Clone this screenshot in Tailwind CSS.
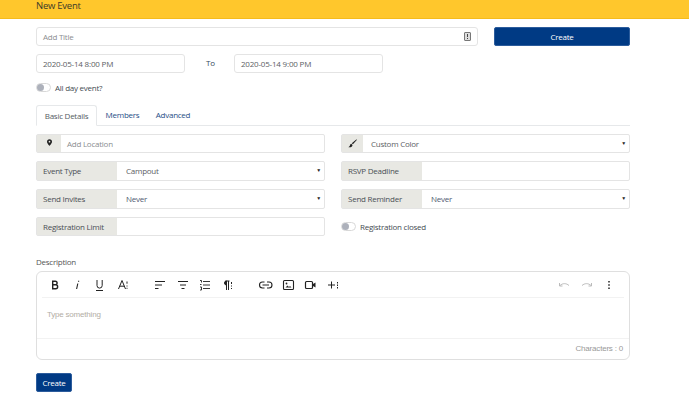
<!DOCTYPE html>
<html lang="en">
<head>
  <meta charset="UTF-8" />
  <title>New Event</title>
  <script src="https://cdn.jsdelivr.net/npm/@tailwindcss/browser@4"></script>
</head>
<body class="bg-white h-[401px] overflow-hidden font-['Open_Sans',sans-serif] text-[8px] tracking-[-0.25px] text-[#4a4f55]">
  <!-- header -->
  <div class="h-[19px] bg-[#ffc72c] border-b border-[#f5bb1c] pl-[36px]">
    <div class="text-[9.500px] leading-[11px] text-[#3b3a2a]">New Event</div>
  </div>

  <div class="pl-[36px] w-[630px]">
    <!-- title row -->
    <div class="flex mt-[8px] gap-[16px]">
      <div class="w-[442px] h-[19px] flex items-center justify-between px-[6px] border border-[#e4e4e4] rounded-[3px] text-[#8a8d90]">
        <span>Add Title</span>
        <svg width="7" height="9" viewBox="0 0 7 9"><rect x=".5" y=".5" width="6" height="8" rx=".5" fill="#ddd" stroke="#777"/><path d="M3.5 2v3M3.5 6v1" stroke="#444"/></svg>
      </div>
      <button class="w-[136px] h-[19px] bg-[#003a84] rounded-[2px] text-white font-medium border border-[#2c5c9c]">Create</button>
    </div>

    <!-- dates -->
    <div class="flex items-center mt-[8px]">
      <div class="w-[149px] h-[19px] flex items-center px-[6px] border border-[#e4e4e4] rounded-[3px] tracking-[-0.2px] text-[#5c6064]">2020-05-14 8:00 PM</div>
      <div class="w-[49px] pl-[21px] text-[#33475b] -mt-[1px]">To</div>
      <div class="w-[149px] h-[19px] flex items-center px-[6px] border border-[#e4e4e4] rounded-[3px] tracking-[-0.2px] text-[#5c6064]">2020-05-14 9:00 PM</div>
    </div>

    <!-- all day -->
    <div class="flex items-center mt-[10px] h-[9px] gap-[4px] text-[#444b52]">
      <span class="w-[15px] h-[9px] rounded-full border border-[#d8d8d8] flex items-center"><span class="w-[7px] h-[7px] rounded-full bg-[#adb1bb]"></span></span>
      <span>All day event?</span>
    </div>

    <!-- tabs -->
    <div class="flex mt-[13px] h-[21px] border-b border-[#e6e8ea]">
      <div class="h-[21px] w-[61px] flex items-center justify-center border border-[#e6e8ea] border-b-white rounded-t-[3px] text-[#555c63]">Basic Details</div>
      <div class="h-[20px] w-[51px] flex items-center justify-center text-[#1f4e86]">Members</div>
      <div class="h-[20px] w-[50px] flex items-center justify-center text-[#1f4e86]">Advanced</div>
    </div>

    <!-- basic details fields -->
    <div class="grid grid-cols-2 gap-x-[16px] mt-[8px]">
      <div class="flex h-[19px] border border-[#e4e4e4] rounded-[2px]">
        <div class="w-[24px] bg-[#e8e8e3] flex items-center justify-center">
          <svg class="-mt-[3px]" width="5" height="7" viewBox="0 0 6 8"><path fill-rule="evenodd" d="M3 0a3 3 0 0 1 3 3C6 5 3 8 3 8S0 5 0 3a3 3 0 0 1 3-3zm0 2a1 1 0 1 0 0 2 1 1 0 0 0 0-2z" fill="#222"/></svg>
        </div>
        <div class="flex-1 flex items-center pl-[6px] text-[#8a8d90]">Add Location</div>
      </div>
      <div class="flex h-[19px] border border-[#e4e4e4] rounded-[2px]">
        <div class="w-[21px] bg-[#e8e8e3] flex items-center justify-center">
          <svg width="9" height="9" viewBox="0 0 9 9"><path d="M8.600.3 3.800 4.200l1.100 1.100L8.800 1zM3.200 4.700C1.800 5 2.200 6.600 1.500 7.200L.4 8.200c2.300.4 4-.4 4.100-2.200z" fill="#222"/></svg>
        </div>
        <div class="flex-1 flex items-center justify-between pl-[8px] pr-[3px] text-[#5c6064]"><span>Custom Color</span><span class="text-[5px] text-[#222]">▼</span></div>
      </div>
    </div>

    <div class="grid grid-cols-2 gap-x-[16px] mt-[8px]">
      <div class="flex h-[20px] border border-[#e4e4e4] rounded-[2px]">
        <div class="w-[80px] bg-[#e8e8e3] flex items-center pl-[6px] text-[#4a4f55]">Event Type</div>
        <div class="flex-1 flex items-center justify-between pl-[9px] pr-[3px] text-[#5c6064]"><span>Campout</span><span class="text-[5px] text-[#222]">▼</span></div>
      </div>
      <div class="flex h-[20px] border border-[#e4e4e4] rounded-[2px]">
        <div class="w-[80px] bg-[#e8e8e3] flex items-center pl-[6px] text-[#4a4f55]">RSVP Deadline</div>
        <div class="flex-1"></div>
      </div>
    </div>

    <div class="grid grid-cols-2 gap-x-[16px] mt-[8px]">
      <div class="flex h-[20px] border border-[#e4e4e4] rounded-[2px]">
        <div class="w-[80px] bg-[#e8e8e3] flex items-center pl-[6px] text-[#4a4f55]">Send Invites</div>
        <div class="flex-1 flex items-center justify-between pl-[9px] pr-[3px] text-[#4f5a70]"><span>Never</span><span class="text-[5px] text-[#222]">▼</span></div>
      </div>
      <div class="flex h-[20px] border border-[#e4e4e4] rounded-[2px]">
        <div class="w-[80px] bg-[#e8e8e3] flex items-center pl-[6px] text-[#4a4f55]">Send Reminder</div>
        <div class="flex-1 flex items-center justify-between pl-[9px] pr-[3px] text-[#4f5a70]"><span>Never</span><span class="text-[5px] text-[#222]">▼</span></div>
      </div>
    </div>

    <div class="grid grid-cols-2 gap-x-[16px] mt-[8px]">
      <div class="flex h-[19px] border border-[#e4e4e4] rounded-[2px]">
        <div class="w-[80px] bg-[#e8e8e3] flex items-center pl-[6px] text-[#4a4f55]">Registration Limit</div>
        <div class="flex-1"></div>
      </div>
      <div class="flex items-center gap-[4px] text-[#444b52]">
        <span class="w-[15px] h-[9px] rounded-full border border-[#d8d8d8] flex items-center"><span class="w-[7px] h-[7px] rounded-full bg-[#adb1bb]"></span></span>
        <span>Registration closed</span>
      </div>
    </div>

    <!-- description -->
    <div class="mt-[20px] h-[12px] leading-[12px] text-[#555]">Description</div>
    <div class="mt-[3px] h-[89px] border border-[#dfdfdf] rounded-[6px] flex flex-col">
      <div class="mx-[5px] h-[26px] border-b border-[#f2f2f2] flex items-center shrink-0">
        <svg class="shrink-0" width="588" height="14" viewBox="0 0 588 14" fill="none" stroke="#222" stroke-width="1">
          <!-- bold -->
          <path d="M10.700 3.200h2.600a1.800 1.800 0 0 1 0 3.600h-2.600zM10.700 6.800h3a1.900 1.900 0 0 1 0 3.900h-3z" stroke-width="1.400"/>
          <!-- italic -->
          <path d="M36 3.200h1.200M35.800 5.500 34.600 11" stroke-width="1.100"/>
          <!-- underline -->
          <path d="M55 2v5.500a2.600 2.600 0 0 0 5.200 0V2M54 12.500h7"/>
          <!-- text size -->
          <path d="M76.500 11 80 2.500l3.500 8.500M77.700 8.200h4.600M85 3.500v2.200M85 7.500v1M85 9.800v1"/>
          <!-- aligns -->
          <path d="M113 3.500h10M113 7h7M113 10.500h3.500"/>
          <path d="M136 3.500h10M138 7h6M139.500 10.500h3"/>
          <!-- ordered list -->
          <path d="M161 3.500h7M161 7h7M161 10.500h7M158 2.500h1.500v2M158 6.500h1.500M158 9h1.500v3h-1.500" stroke-width=".9"/>
          <!-- paragraph -->
          <path d="M184.500 3v9M186.500 3v9M187.500 3h-4"/><path d="M184.500 3v4a2 2 0 0 1 0-4z" fill="#222"/><path d="M189.500 4v2M189.500 7.500v1M189.500 10v1"/>
          <!-- link -->
          <path d="M222.500 4h-2a3 3 0 0 0 0 6h2M225 4h2a3 3 0 0 1 0 6h-2M220.500 7h6.500" stroke-width="1.100"/>
          <!-- image -->
          <rect x="241.500" y="2.500" width="10" height="9" rx="1" stroke-width="1.100"/>
          <path d="M243.500 9.500l2-2 1.500 1.500 1-1 1.500 1.500z" fill="#222" stroke="none"/><circle cx="244.500" cy="5.500" r=".9" fill="#222" stroke="none"/>
          <!-- video -->
          <rect x="263.500" y="3.500" width="7" height="7" rx="1" stroke-width="1.200"/><path d="M271 6l2.500-1.500v5L271 8z" fill="#222" stroke="none"/>
          <!-- more -->
          <path d="M286 7h7M289.500 3.500v7M295.500 4v1.500M295.500 6.500v1.500M295.500 9v1.500"/>
          <!-- undo redo -->
          <path d="M517.500 5v3h3M518 7.500c3-2.500 6-2.500 9 0" stroke="#bbb"/>
          <path d="M549.500 5v3h-3M549 7.500c-3-2.500-6-2.500-9 0" stroke="#bbb"/>
          <path d="M567 3v1.500M567 6.200v1.600M567 9.500v1.500" stroke-width="1.500"/>
        </svg>
      </div>
      <div class="flex-1 pl-[10px] pt-[11px] font-['Liberation_Sans',sans-serif] text-[8px] tracking-[-0.2px] text-[#b3ada5]">Type something</div>
      <div class="h-[21px] border-t border-[#f2f2f2] flex items-center justify-end pr-[6px] font-['Liberation_Sans',sans-serif] text-[8px] tracking-[-0.2px] text-[#999]">Characters : 0</div>
    </div>

    <button class="block mt-[13px] w-[36px] h-[19px] bg-[#003a84] rounded-[2px] text-white font-medium border border-[#2c5c9c]">Create</button>
  </div>
</body>
</html>
